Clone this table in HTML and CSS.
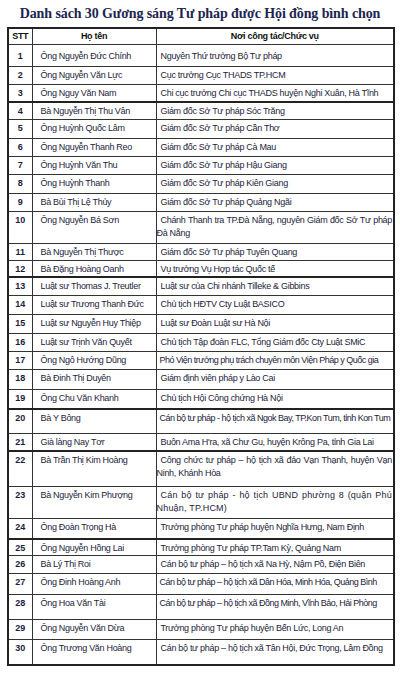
FILE: index.html
```html
<!DOCTYPE html>
<html lang="vi">
<head>
<meta charset="utf-8">
<title>Danh sách 30 Gương sáng Tư pháp</title>
<link rel="stylesheet" href="styles.css">
</head>
<body>
<h1 class="title">Danh sách 30 Gương sáng Tư pháp được Hội đồng bình chọn</h1>
<table class="list">
  <colgroup><col class="c-stt"><col class="c-name"><col class="c-job"></colgroup>
  <thead>
    <tr class="h16"><th>STT</th><th>Họ tên</th><th>Nơi công tác/Chức vụ</th></tr>
  </thead>
  <tbody>
    <tr class="h22 first"><td>1</td><td>Ông Nguyễn Đức Chính</td><td>Nguyên Thứ trưởng Bộ Tư pháp</td></tr>
    <tr class="h18"><td>2</td><td>Ông Nguyễn Văn Lực</td><td>Cục trưởng Cục THADS TP.HCM</td></tr>
    <tr class="h18"><td>3</td><td>Ông Nguy Văn Nam</td><td>Chi cục trưởng Chi cục THADS huyện Nghi Xuân, Hà Tĩnh</td></tr>
    <tr class="h17 thick"><td>4</td><td>Bà Nguyễn Thị Thu Vân</td><td>Giám đốc Sở Tư pháp Sóc Trăng</td></tr>
    <tr class="h19"><td>5</td><td>Ông Huỳnh Quốc Lâm</td><td>Giám đốc Sở Tư pháp Cần Thơ</td></tr>
    <tr class="h18"><td>6</td><td>Ông Nguyễn Thanh Reo</td><td>Giám đốc Sở Tư pháp Cà Mau</td></tr>
    <tr class="h18"><td>7</td><td>Ông Huỳnh Văn Thu</td><td>Giám đốc Sở Tư pháp Hậu Giang</td></tr>
    <tr class="h19"><td>8</td><td>Ông Huỳnh Thanh</td><td>Giám đốc Sở Tư pháp Kiên Giang</td></tr>
    <tr class="h18"><td>9</td><td>Bà Bùi Thị Lệ Thủy</td><td>Giám đốc Sở Tư pháp Quảng Ngãi</td></tr>
    <tr class="h32 wrap"><td>10</td><td>Ông Nguyễn Bá Sơn</td><td>Chánh Thanh tra TP.Đà Nẵng, nguyên Giám đốc Sở Tư pháp Đà Nẵng</td></tr>
    <tr class="h17"><td>11</td><td>Bà Nguyễn Thị Thược</td><td>Giám đốc Sở Tư pháp Tuyên Quang</td></tr>
    <tr class="h16"><td>12</td><td>Bà Đặng Hoàng Oanh</td><td>Vụ trưởng Vụ Hợp tác Quốc tế</td></tr>
    <tr class="h19 thick"><td>13</td><td>Luật sư Thomas J. Treutler</td><td>Luật sư của Chi nhánh Tilleke &amp; Gibbins</td></tr>
    <tr class="h19"><td>14</td><td>Luật sư Trương Thanh Đức</td><td>Chủ tịch HĐTV Cty Luật BASICO</td></tr>
    <tr class="h19"><td>15</td><td>Luật sư Nguyễn Huy Thiệp</td><td>Luật sư Đoàn Luật sư Hà Nội</td></tr>
    <tr class="h18"><td>16</td><td>Luật sư Trịnh Văn Quyết</td><td>Chủ tịch Tập đoàn FLC, Tổng Giám đốc Cty Luật SMiC</td></tr>
    <tr class="h18"><td>17</td><td>Ông Ngô Hướng Dũng</td><td class="tight">Phó Viện trưởng phụ trách chuyên môn Viện Pháp y Quốc gia</td></tr>
    <tr class="h20"><td>18</td><td>Bà Đinh Thị Duyên</td><td>Giám định viên pháp y Lào Cai</td></tr>
    <tr class="h19"><td>19</td><td>Ông Chu Văn Khanh</td><td>Chủ tịch Hội Công chứng Hà Nội</td></tr>
    <tr class="h25 thick"><td>20</td><td>Bà Y Bông</td><td class="tight">Cán bộ tư pháp - hộ tịch xã Ngok Bay, TP.Kon Tum, tỉnh Kon Tum</td></tr>
    <tr class="h17"><td>21</td><td>Già làng Nay Tơr</td><td>Buôn Ama H'ra, xã Chư Gu, huyện Krông Pa, tỉnh Gia Lai</td></tr>
    <tr class="h36 wrap thick"><td>22</td><td>Bà Trần Thị Kim Hoàng</td><td>Công chức tư pháp – hộ tịch xã đảo Vạn Thạnh, huyện Vạn Ninh, Khánh Hòa</td></tr>
    <tr class="h32 wrap"><td>23</td><td>Bà Nguyễn Kim Phượng</td><td class="wide">Cán bộ tư pháp - hộ tịch UBND phường 8 (quận Phú Nhuận, TP.HCM)</td></tr>
    <tr class="h20"><td>24</td><td>Ông Đoàn Trọng Hà</td><td>Trưởng phòng Tư pháp huyện Nghĩa Hưng, Nam Định</td></tr>
    <tr class="h16 thick"><td>25</td><td>Ông Nguyễn Hồng Lai</td><td>Trưởng phòng Tư pháp TP.Tam Kỳ, Quảng Nam</td></tr>
    <tr class="h18"><td>26</td><td>Bà Lý Thị Roi</td><td>Cán bộ tư pháp – hộ tịch xã Na Hỳ, Nậm Pồ, Điện Biên</td></tr>
    <tr class="h21"><td>27</td><td>Ông Đinh Hoàng Anh</td><td class="tight">Cán bộ tư pháp – hộ tịch xã Dân Hóa, Minh Hóa, Quảng Bình</td></tr>
    <tr class="h25"><td>28</td><td>Ông Hoa Văn Tài</td><td class="tight">Cán bộ tư pháp – hộ tịch xã Đồng Minh, Vĩnh Bảo, Hải Phòng</td></tr>
    <tr class="h20"><td>29</td><td>Ông Nguyễn Văn Dừa</td><td>Trưởng phòng Tư pháp huyện Bến Lức, Long An</td></tr>
    <tr class="h26"><td>30</td><td>Ông Trương Văn Hoàng</td><td>Cán bộ tư pháp – hộ tịch xã Tân Hội, Đức Trọng, Lâm Đồng</td></tr>
  </tbody>
</table>
</body>
</html>
```
FILE: styles.css
```css
* { box-sizing: border-box; }
html, body { margin: 0; padding: 0; background: #ffffff; }
body { width: 400px; }

.title {
  margin: 0;
  padding-top: 5px;
  height: 27px;
  font-family: "Liberation Serif", "Times New Roman", serif;
  font-weight: bold;
  font-size: 14px;
  line-height: 17px;
  text-align: center;
  color: #1c2550;
  letter-spacing: -0.1px;
}

.list {
  margin-left: 7px;
  width: 386px;
  border-collapse: collapse;
  table-layout: fixed;
  border: 2px solid #222;
  font-family: "Liberation Sans", Arial, sans-serif;
  font-size: 9px;
  color: #1d1d3a;
}
.c-stt { width: 24px; }
.c-name { width: 124px; }
.c-job { width: 238px; }

.list th, .list td {
  border: 1px solid #333;
  padding: 2px 0 0 0;
  vertical-align: top;
  line-height: 13px;
  white-space: nowrap;
  overflow: hidden;
  letter-spacing: -0.3px;
}
.list th {
  font-weight: bold;
  text-align: center;
  padding-top: 1px;
  vertical-align: middle;
  color: #111;
}
.list td:first-child { text-align: center; font-weight: bold; letter-spacing: 0; }
.list td:nth-child(2) { padding-left: 8px; }
.list td:nth-child(3) { padding-left: 4px; }
.list td.tight { letter-spacing: -0.5px; padding-left: 3px; }

.list tr.first td { padding-top: 5px; }
.list tr.thick td { border-top: 2px solid #222; }

.list tr.wrap td:nth-child(3) {
  white-space: normal;
  padding-left: 0;
  padding-right: 1px;
  text-indent: 4px;
  text-align: justify;
}
.list tr.wrap td.wide { letter-spacing: 0.2px; }

.h16 > * { height: 16px; }
.h17 > * { height: 17px; }
.h18 > * { height: 18px; }
.h19 > * { height: 19px; }
.h20 > * { height: 20px; }
.h21 > * { height: 21px; }
.h22 > * { height: 22px; }
.h25 > * { height: 25px; }
.h26 > * { height: 26px; }
.h32 > * { height: 32px; }
.h36 > * { height: 36px; }
```
